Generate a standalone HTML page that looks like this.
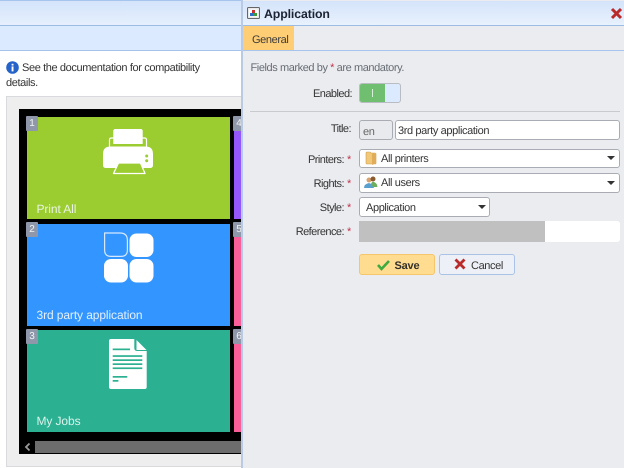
<!DOCTYPE html>
<html><head><meta charset="utf-8"><style>
html,body{margin:0;padding:0}
body{width:624px;height:468px;overflow:hidden;position:relative;background:#fff;font-family:"Liberation Sans",sans-serif;font-size:11px;letter-spacing:-.38px;color:#333;text-rendering:geometricPrecision}
div,svg{position:absolute}
#w{left:0;top:0;width:624px;height:468px;overflow:hidden;filter:blur(.35px)}
.t{white-space:nowrap;line-height:14px}
.tile{left:27px;width:202.500px;height:102px}
.b{left:26px;width:12px;height:15px;background:#8f98aa;color:#f2f2f2;font-size:10px;letter-spacing:0;line-height:15px;text-align:center;border-radius:1px}
.lbl{left:36.500px;color:#e8f4e0;font-size:12px;letter-spacing:-.1px;white-space:nowrap;line-height:16px}
.r{text-align:right;left:250px;width:94px;white-space:nowrap;line-height:14px;color:#333;letter-spacing:-.55px}
.s{color:#c0334a;position:absolute;left:347px;line-height:14px}
.in{background:#fff;border:1px solid #a9adb3;border-radius:3px;box-sizing:border-box;line-height:18px;white-space:nowrap;color:#333}
.ar{width:0;height:0;border-left:4px solid transparent;border-right:4px solid transparent;border-top:4px solid #333}
</style></head><body><div id="w">
<div style="left:0;top:0;width:624px;height:26px;background:linear-gradient(#d4e4fb,#e6f0fd);border-top:1px solid #a7c5ec;border-bottom:1px solid #9dbce4;box-sizing:border-box"></div>
<div style="left:0;top:26px;width:242px;height:25px;background:#dceaff;border-bottom:1px solid #a7c5ec;box-sizing:border-box"></div>
<svg style="left:6px;top:61px" width="13" height="13" viewBox="0 0 13 13"><circle cx="6.500" cy="6.500" r="6.300" fill="#2563c8"/><rect x="5.600" y="5.400" width="1.900" height="5" fill="#fff"/><rect x="5.600" y="2.800" width="1.900" height="1.700" fill="#fff"/></svg>
<div class="t" style="left:22px;top:60.500px">See the documentation for compatibility</div>
<div class="t" style="left:6px;top:75.500px">details.</div>
<div style="left:6px;top:96px;width:240px;height:371px;background:#eee;border:1px solid #d9dade;box-sizing:border-box"></div>
<div style="left:19px;top:109px;width:225px;height:345px;background:#000"></div>
<div class="tile" style="top:117px;background:#9bcd30"></div>
<div class="tile" style="top:223.500px;background:#3395ff"></div>
<div class="tile" style="top:330px;background:#2bb092"></div>
<div style="left:234px;top:117px;width:10px;height:102px;background:#9457fb"></div>
<div style="left:234px;top:223.500px;width:10px;height:102px;background:#fb5f9a"></div>
<div style="left:234px;top:330px;width:10px;height:102px;background:#fb5f9a"></div>
<div class="b" style="top:116px">1</div>
<div class="b" style="top:222px">2</div>
<div class="b" style="top:329px">3</div>
<div class="b" style="top:116px;left:233px">4</div>
<div class="b" style="top:222px;left:233px">5</div>
<div class="b" style="top:329px;left:233px">6</div>
<div class="lbl" style="top:201px">Print All</div>
<div class="lbl" style="top:307px;color:#e3f0ff">3rd party application</div>
<div class="lbl" style="top:413px;color:#dcf4ec">My Jobs</div>
<!-- printer -->
<svg style="left:90px;top:120px" width="80" height="70" viewBox="0 0 80 70">
<path fill="none" stroke="#fff" stroke-width="1.200" d="M19.500 27v-7q0-2 2-2h33q2 0 2 2v7"/>
<path fill="#fff" d="M23.300 11q0-2 2-2h25.400q2 0 2 2v13H23.300z"/>
<path fill="#fff" d="M13 34q0-7.500 7.500-7.500h35q7.500 0 7.500 7.500v11q0 3-3 3H16q-3 0-3-3z"/>
<path fill="#9bcd30" stroke="#fff" stroke-width="1.300" stroke-linejoin="round" d="M28.500 43H50.500L55 53.500H23.500z"/>
<circle cx="56.700" cy="36" r="1.500" fill="#9bcd30"/><circle cx="56.700" cy="40.700" r="1.500" fill="#9bcd30"/>
</svg>
<!-- app -->
<svg style="left:90px;top:225px" width="80" height="70" viewBox="0 0 80 70">
<rect x="39.500" y="8.500" width="24" height="23.500" rx="7" fill="#fff"/>
<rect x="14" y="34" width="24" height="23.500" rx="7" fill="#fff"/>
<rect x="39.500" y="34" width="24" height="23.500" rx="7" fill="#fff"/>
<path fill="none" stroke="#d6e9ff" stroke-width="1.200" d="M14.600 8H30q7.400 0 7.400 7.400V25q0 6.400-6.400 6.400H21q-6.400 0-6.400-6.400z"/>
</svg>
<!-- doc -->
<svg style="left:90px;top:330px" width="80" height="70" viewBox="0 0 80 70">
<path fill="#fff" d="M21 9h23.300v9q0 3 3 3h9.400v36q0 2-2 2H21q-2 0-2-2V11q0-2 2-2z"/>
<path fill="#fff" d="M46.500 10L56.500 20H46.500z"/>
<g fill="#2bb092"><rect x="22.700" y="18.500" width="17.300" height="1.700"/><rect x="22.700" y="25.200" width="29.600" height="1.700"/><rect x="22.700" y="29.300" width="29.600" height="1.700"/><rect x="22.700" y="33.300" width="29.600" height="1.700"/><rect x="22.700" y="37.400" width="29.600" height="1.700"/><rect x="22.700" y="46" width="14.600" height="1.700"/><rect x="22.700" y="50" width="5.700" height="1.700"/></g>
</svg>
<!-- scrollbar -->
<div style="left:35px;top:440.500px;width:210px;height:12.500px;background:#6d6d6d"></div>
<svg style="left:24px;top:442px" width="8" height="10" viewBox="0 0 8 10"><path d="M5.500 1.500L2 5l3.500 3.500" fill="none" stroke="#9a9a9a" stroke-width="1.800"/></svg>

<!-- panel -->
<div style="left:241px;top:0;width:383px;height:468px;background:#ebecf0;border-left:2px solid #b8cae4;box-sizing:border-box"></div>
<div style="left:243px;top:1px;width:381px;height:24px;background:linear-gradient(#d5e4fa,#e8f1fd)"></div>
<div style="left:243px;top:25px;width:381px;height:1px;background:#9dbce4"></div>
<div style="left:243px;top:50px;width:381px;height:1px;background:#a7c5ec"></div>
<div style="left:243px;top:26px;width:50.500px;height:24px;background:#ffcd73"></div>
<div class="t" style="left:252px;top:32.500px;color:#3a3a3a">General</div>
<svg style="left:247px;top:7px" width="13" height="12" viewBox="0 0 13 12"><rect x=".5" y=".5" width="12" height="11" rx="1" fill="#e8e8e8" stroke="#666"/><rect x="2" y="2.500" width="9" height="7" fill="#fff"/><rect x="5" y="3" width="3" height="3" fill="#c93030"/><rect x="3" y="6" width="3.500" height="3" fill="#2e6fc9"/><rect x="6.500" y="6" width="3.500" height="3" fill="#3c9b3c"/></svg>
<div class="t" style="left:264px;top:7px;font-weight:bold;font-size:12.300px;color:#1c2433;letter-spacing:-.1px">Application</div>
<svg style="left:610px;top:7px" width="13" height="13" viewBox="0 0 13 13"><path d="M2 2L11 11M11 2L2 11" stroke="#b92a2a" stroke-width="3" fill="none"/></svg>
<div class="t" style="left:250.500px;top:61px;color:#666c74;letter-spacing:-.42px">Fields marked by <span style="color:#c0334a">*</span> are mandatory.</div>
<div class="t" style="left:313px;top:86.500px;color:#333;letter-spacing:-.55px">Enabled:</div>
<div style="left:359px;top:83px;width:42px;height:20px;background:#dceaff;border:1px solid #b9bcc2;border-radius:3px;box-sizing:border-box;overflow:hidden"><div style="left:0;top:0;width:25px;height:18px;background:#70bf70"></div><div style="left:12px;top:5px;width:1px;height:8px;background:#d6efd6"></div></div>
<div style="left:250px;top:111px;width:370px;height:1px;background:#c9cacd"></div>

<div class="r" style="top:121.500px;left:257px;width:94px">Title:</div>
<div class="in" style="left:359px;top:120px;width:34px;height:19.500px;background:#e9eaed;color:#666;padding:2px 0 0 3px">en</div>
<div class="in" style="left:395px;top:120px;width:225px;height:19.500px;padding:1px 0 0 2px">3rd party application</div>

<div class="r" style="top:152.500px">Printers:</div><div class="s" style="top:152.500px">*</div>
<div class="in" style="left:359px;top:148.500px;width:261px;height:19.500px;padding-left:21px">All printers</div>
<svg style="left:365px;top:150.500px" width="12" height="15" viewBox="0 0 12 15"><path d="M1 2q0-1 1-1h3l1 1h4q1 0 1 1v9q0 1-1 1H2q-1 0-1-1z" fill="#f1c778" stroke="#cfa24f" stroke-width=".6"/><path d="M7 2l4 1v9l-4 2z" fill="#e2ad58"/></svg>
<div class="ar" style="left:607px;top:156px"></div>

<div class="r" style="top:176.500px">Rights:</div><div class="s" style="top:176.500px">*</div>
<div class="in" style="left:359px;top:173px;width:261px;height:19.500px;padding-left:21px">All users</div>
<svg style="left:364px;top:175px" width="14" height="14" viewBox="0 0 14 14"><circle cx="5" cy="5" r="2.500" fill="#d6a36f"/><circle cx="9" cy="4" r="2.500" fill="#8a5a30"/><path d="M0 13q0-4 5-5 4 1 5 5z" fill="#5aa0cf"/><path d="M7 9q1-3 3-2 3 1 3.500 5H9z" fill="#6cae5c"/></svg>
<div class="ar" style="left:607px;top:180.500px"></div>

<div class="r" style="top:201px">Style:</div><div class="s" style="top:201px">*</div>
<div class="in" style="left:359px;top:197px;width:131px;height:20px;padding-left:6px;line-height:20px">Application</div>
<div class="ar" style="left:478px;top:205px"></div>

<div class="r" style="top:225px">Reference:</div><div class="s" style="top:225px">*</div>
<div style="left:359px;top:221px;width:261px;height:21px;background:#fff;border-radius:0 3px 3px 0"></div>
<div style="left:359px;top:221px;width:186px;height:21px;background:#c0c0c0"></div>

<div style="left:359px;top:254px;width:76px;height:21px;background:#ffdc90;border:1px solid #f5c66c;border-radius:3px;box-sizing:border-box"></div>
<svg style="left:377px;top:258px" width="13" height="13" viewBox="0 0 13 13"><path d="M1 7l3.500 4L12 3" fill="none" stroke="#3faa3f" stroke-width="2.600"/></svg>
<div class="t" style="left:394.500px;top:258.500px;font-weight:bold;color:#33302a;letter-spacing:-.2px">Save</div>
<div style="left:439px;top:254px;width:76px;height:21px;background:#edf0f6;border:1px solid #a9c3e6;border-radius:3px;box-sizing:border-box"></div>
<svg style="left:454px;top:258px" width="12" height="12" viewBox="0 0 12 12"><path d="M1.500 1.500L10.500 10.500M10.500 1.500L1.500 10.500" stroke="#b92a2a" stroke-width="2.800" fill="none"/></svg>
<div class="t" style="left:471px;top:258.500px;color:#333">Cancel</div>
</div></body></html>
